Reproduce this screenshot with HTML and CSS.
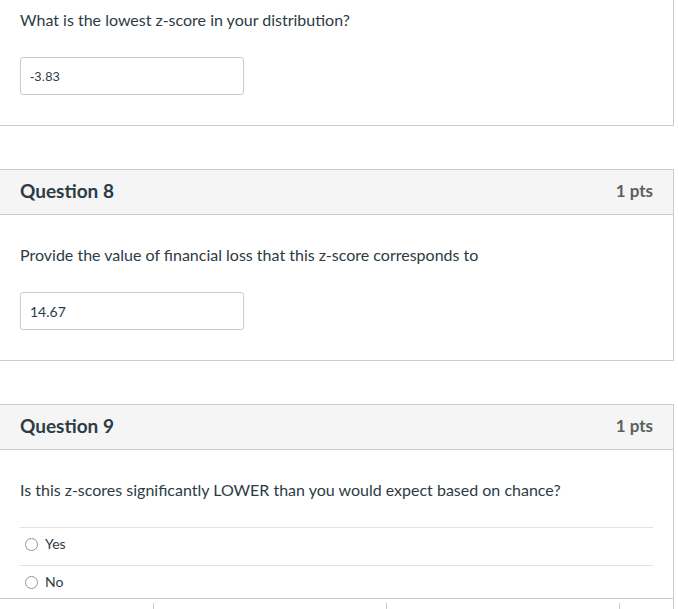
FILE: index.html
```html
<!DOCTYPE html>
<html>
<head>
<meta charset="utf-8">
<link rel="stylesheet" href="styles.css">
</head>
<body>
<div class="quiz">
  <div class="card card-partial">
    <div class="q-body">
      <p class="q-text">What is the lowest z-score in your distribution?</p>
      <div class="answer-input alt-font">-3.83</div>
    </div>
  </div>

  <div class="card">
    <div class="q-header">
      <span class="q-title">Question 8</span>
      <span class="q-pts">1 pts</span>
    </div>
    <div class="q-body">
      <p class="q-text">Provide the value of financial loss that this z-score corresponds to</p>
      <div class="answer-input">14.67</div>
    </div>
  </div>

  <div class="card card-last">
    <div class="q-header">
      <span class="q-title">Question 9</span>
      <span class="q-pts">1 pts</span>
    </div>
    <div class="q-body q-body-choices">
      <p class="q-text">Is this z-scores significantly LOWER than you would expect based on chance?</p>
      <div class="choices">
        <div class="choice"><span class="radio"></span><span class="choice-label">Yes</span></div>
        <div class="choice"><span class="radio"></span><span class="choice-label">No</span></div>
      </div>
    </div>
    <div class="card-foot">
      <span class="tick"></span><span class="tick"></span><span class="tick"></span>
    </div>
  </div>
</div>
</body>
</html>
```
FILE: styles.css
```css
html, body {
  margin: 0;
  padding: 0;
  background: #fff;
}
body {
  font-family: Lato, "Open Sans", sans-serif;
  color: #2d3b45;
  height: 609px;
  overflow: hidden;
}
.quiz {
  width: 675px;
  margin-left: -1px;
  display: flex;
  flex-direction: column;
  gap: 43px;
}
.card {
  border: 1px solid #c7cdd1;
  background: #fff;
}
.card-partial {
  border-top: none;
}
.card-last {
  border-bottom: none;
}
.q-header {
  box-sizing: border-box;
  display: flex;
  justify-content: space-between;
  align-items: center;
  height: 45px;
  padding: 0 20px 3px 20px;
  background: #f5f5f5;
  border-bottom: 1px solid #c7cdd1;
}
.q-title {
  font-size: 19px;
  font-weight: 700;
  color: #2d3b45;
}
.q-pts {
  font-size: 17px;
  font-weight: 700;
  color: #5a5f63;
}
.q-body {
  padding: 28px 20px 30px 20px;
}
.card-partial .q-body {
  padding-top: 8px;
}
.q-text {
  margin: 0 0 25px;
  font-size: 16px;
  line-height: 24px;
}
.answer-input {
  box-sizing: border-box;
  width: 224px;
  height: 38px;
  border: 1px solid #c7cdd1;
  border-radius: 3px;
  padding: 0 9px;
  display: flex;
  align-items: center;
  font-size: 14px;
  color: #2d3b45;
}
.alt-font {
  font-family: "Liberation Sans", Arial, sans-serif;
  font-size: 13px;
}
.q-body-choices {
  padding-bottom: 0;
}
.choice {
  box-sizing: border-box;
  display: flex;
  align-items: center;
  height: 38px;
  border-top: 1px solid #dfe3e5;
  padding: 0 0 5px 5px;
}
.choice + .choice {
  height: 33px;
  padding-bottom: 0;
  padding-top: 0;
}
.radio {
  width: 11px;
  height: 11px;
  border: 1px solid #8b969e;
  border-radius: 50%;
  margin-right: 7px;
  box-sizing: content-box;
}
.choice-label {
  font-size: 14px;
  line-height: 20px;
}
.card-foot {
  border-top: 1px solid #c7cdd1;
  height: 10px;
  display: flex;
  align-items: flex-end;
  padding-left: 153px;
  gap: 232px;
}
.tick {
  width: 1px;
  height: 6px;
  background: #c7cdd1;
}
```
